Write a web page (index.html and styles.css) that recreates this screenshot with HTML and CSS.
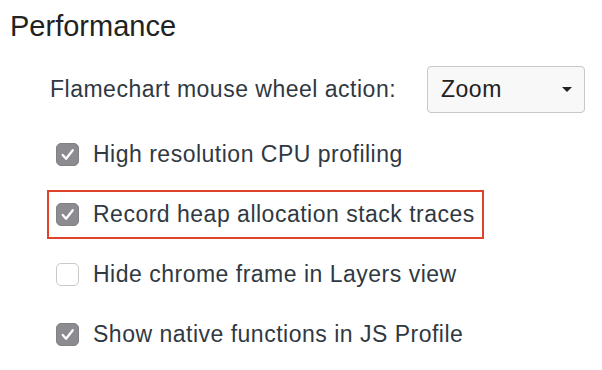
FILE: index.html
```html
<!DOCTYPE html>
<html lang="en">

<head>
    <meta charset="UTF-8" />
    <title>Performance settings</title>
    <link rel="stylesheet" href="styles.css">
</head>

<body>
    <section class="panel">
        <h1>Performance</h1>

        <!-- Dropdown setting -->
        <div class="setting">
            <span class="setting-label">Flamechart mouse wheel action:</span>
            <div class="select">
                <span>Zoom</span>
                <span class="caret"></span>
            </div>
        </div>

        <!-- Checkbox settings -->
        <div class="options">
            <label class="option">
                <span class="box checked">
                    <svg viewBox="0 0 22 22"><polyline points="6,11.5 9.5,15.5 16.5,6.5" /></svg>
                </span>
                High resolution CPU profiling
            </label>
            <label class="option highlight">
                <span class="box checked">
                    <svg viewBox="0 0 22 22"><polyline points="6,11.5 9.5,15.5 16.5,6.5" /></svg>
                </span>
                Record heap allocation stack traces
            </label>
            <label class="option">
                <span class="box"></span>
                Hide chrome frame in Layers view
            </label>
            <label class="option">
                <span class="box checked">
                    <svg viewBox="0 0 22 22"><polyline points="6,11.5 9.5,15.5 16.5,6.5" /></svg>
                </span>
                Show native functions in JS Profile
            </label>
        </div>
    </section>
</body>

</html>
```

FILE: styles.css
```css
/* Reset & Global Styles */
* {
    margin: 0;
    padding: 0;
    box-sizing: border-box;
}

body {
    background: #fff;
    font-family: 'Liberation Sans', Arial, sans-serif;
    color: #303942;
}

.panel {
    padding: 10px 0 0 10px;
}

h1 {
    font-size: 29px;
    font-weight: normal;
    line-height: 33px;
    color: #222;
}

/* Dropdown row */
.setting {
    display: flex;
    align-items: center;
    margin: 23px 0 0 40px;
    height: 47px;
}

.setting-label {
    font-size: 23px;
    letter-spacing: 0.5px;
    width: 377px;
}

.select {
    display: flex;
    align-items: center;
    justify-content: space-between;
    width: 158px;
    height: 47px;
    padding: 0 12px 0 13px;
    background: #f8f8f8;
    border: 1px solid #c8c8c8;
    border-radius: 4px;
    font-size: 23px;
    letter-spacing: 0.5px;
    color: #222;
}

.caret {
    width: 0;
    height: 0;
    border-left: 5px solid transparent;
    border-right: 5px solid transparent;
    border-top: 5px solid #222;
}

/* Checkbox rows */
.options {
    display: flex;
    flex-direction: column;
    gap: 11px;
    margin: 17px 0 0 37px;
}

.option {
    display: flex;
    align-items: center;
    gap: 14px;
    width: fit-content;
    height: 49px;
    padding: 0 7px;
    border: 2px solid transparent;
    font-size: 23px;
    letter-spacing: 0.5px;
}

.option.highlight {
    border-color: #e0432b;
}

.box {
    flex: none;
    width: 23px;
    height: 23px;
    border: 1px solid #c9c9c9;
    border-radius: 5px;
    background: #fff;
}

.box.checked {
    background: #8b8b90;
    border-color: #808085;
}

.box svg {
    display: block;
    width: 100%;
    height: 100%;
    fill: none;
    stroke: #fff;
    stroke-width: 2.4;
    stroke-linecap: round;
    stroke-linejoin: round;
}
```
